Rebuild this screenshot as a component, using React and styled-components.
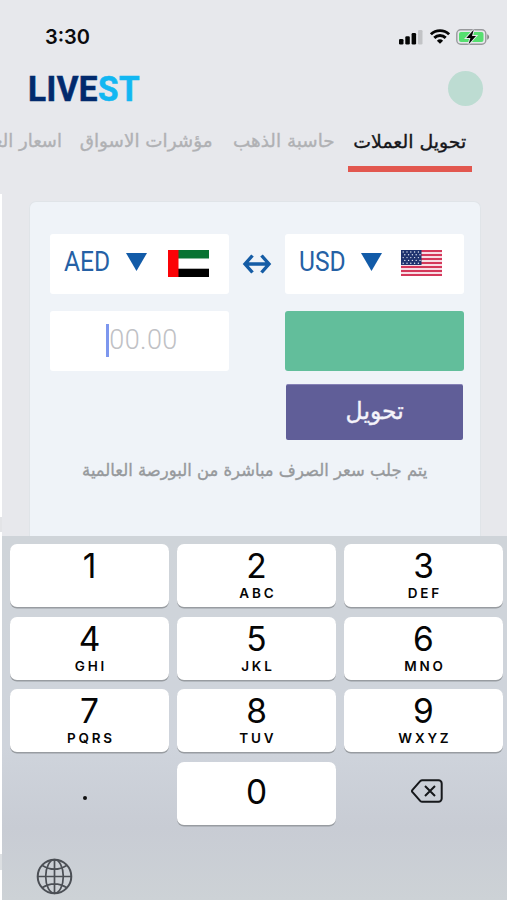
import React, { useState } from "react";
import styled, { createGlobalStyle } from "styled-components";

// -------------------- DATA --------------------
const tabs = [
  { label: "تحويل العملات", width: 124, size: 18, stretch: 1.05 },
  { label: "حاسبة الذهب", width: 112, size: 18, stretch: 1.02 },
  { label: "مؤشرات الاسواق", width: 147, size: 18, stretch: 1.02 },
  { label: "اسعار العملات", width: 112, size: 18, stretch: 1 },
];

const keys = [
  { digit: "1", letters: "" },
  { digit: "2", letters: "ABC" },
  { digit: "3", letters: "DEF" },
  { digit: "4", letters: "GHI" },
  { digit: "5", letters: "JKL" },
  { digit: "6", letters: "MNO" },
  { digit: "7", letters: "PQRS" },
  { digit: "8", letters: "TUV" },
  { digit: "9", letters: "WXYZ" },
];

// -------------------- STYLES --------------------
const GlobalStyle = createGlobalStyle`
  * { box-sizing: border-box; }
  body {
    margin: 0;
    background: #e7e8ec;
    overflow: hidden;
  }
`;

const Screen = styled.div`
  width: 507px;
  height: 900px;
  display: flex;
  flex-direction: column;
  overflow: hidden;
  background: #e7e8ec;
  font-family: "Roboto", "DejaVu Sans", sans-serif;
`;

const StatusBar = styled.header`
  height: 62px;
  padding: 11px 17px 0 45px;
  display: flex;
  align-items: center;
  justify-content: space-between;
`;

const Clock = styled.span`
  font: 600 20px/24px "Inter", sans-serif;
  color: #0b0b0d;
`;

const StatusIcons = styled.div`
  display: flex;
  align-items: center;
  gap: 6px;
`;

const Header = styled.div`
  height: 52px;
  padding: 0 24px 0 28px;
  display: flex;
  align-items: center;
  justify-content: space-between;
`;

const Logo = styled.div`
  font-size: 35px;
  font-weight: 700;
  line-height: 40px;
  letter-spacing: 0.5px;
  color: #022a6d;
  -webkit-text-stroke: 0.6px currentColor;
  transform: scaleX(0.95);
  transform-origin: left;
  padding-top: 3px;

  span { color: #12b7f2; }
`;

const Avatar = styled.div`
  width: 35px;
  height: 35px;
  border-radius: 50%;
  background: #bddcd2;
`;

const Tabs = styled.nav`
  height: 80px;
  padding: 8px 35px 0 0;
  display: flex;
  gap: 8px;
  direction: rtl;
  overflow: hidden;
`;

const Tab = styled.button`
  flex: none;
  width: ${(p) => p.$width}px;
  height: 50px;
  padding: 0 0 ${(p) => (p.$active ? 4 : 7)}px;
  border: 0;
  border-bottom: 6px solid ${(p) => (p.$active ? "#e2574f" : "transparent")};
  background: none;
  color: ${(p) => (p.$active ? "#16171b" : "#b0b1b4")};
  display: flex;
  align-items: center;
  justify-content: center;
`;

const Arabic = styled.span`
  flex: none;
  font-family: "DejaVu Sans", sans-serif;
  font-size: ${(p) => p.$size}px;
  line-height: 1.4;
  white-space: nowrap;
  direction: rtl;
  -webkit-text-stroke: 0.35px currentColor;
  transform: scaleX(${(p) => p.$stretch});
`;

const Body = styled.main`
  flex: 1;
  display: flex;
  min-height: 0;
`;

const Edge = styled.div`
  flex: none;
  width: 2px;
  background: linear-gradient(
    #fff 323px, #e3e4e7 323px 338px, #fff 338px 660px, #dcdfe2 660px 676px, #fff 676px
  );
`;

const Content = styled.div`
  flex: 1;
  display: flex;
  flex-direction: column;
`;

const Card = styled.section`
  width: 452px;
  height: 335px;
  margin: 7px 0 0 27px;
  padding: 32px 16px 0 20px;
  border: 1px solid #e0e4e8;
  border-bottom: 0;
  border-radius: 7px 7px 0 0;
  background: #eff3f8;
`;

const Grid = styled.div`
  display: grid;
  grid-template-columns: 179px 56px 179px;
  grid-template-rows: 60px 60px 56px;
  row-gap: 17px;
`;

const Picker = styled.button`
  border: 0;
  border-radius: 3px;
  background: #fff;
  padding: 0 20px 2px 14px;
  display: flex;
  align-items: center;
`;

const Code = styled.span`
  flex: none;
  width: 62px;
  padding-bottom: 2px;
  text-align: left;
  font: 400 27px/30px "Roboto", sans-serif;
  color: #2561a5;
  transform: scaleX(0.91);
  transform-origin: left;
`;

const Caret = styled.svg`
  flex: none;
  margin-bottom: 3px;
  margin-right: ${(p) => p.$gap}px;
`;

const Swap = styled.div`
  display: grid;
  place-items: center;
`;

const Amount = styled.div`
  border-radius: 3px;
  background: #fff;
  color: #c0c1c5;
  font: 300 27px/33px "Roboto", sans-serif;
  letter-spacing: 0.4px;
  display: flex;
  align-items: center;
  justify-content: center;
  padding-left: 5px;
  padding-bottom: 2px;
`;

const Cursor = styled.i`
  width: 3px;
  height: 33px;
  background: #7d97ee;
`;

const Result = styled.div`
  grid-column: 3;
  border-radius: 3px;
  background: #62be9b;
`;

const Convert = styled.button`
  grid-column: 3;
  height: 56px;
  margin: -4px 1px 0;
  padding: 0 0 2px;
  border: 0;
  border-top: 1px solid #8580b5;
  border-radius: 2px;
  background: #605e98;
  color: #f4f3fa;
  display: flex;
  align-items: center;
  justify-content: center;
`;

const Note = styled.p`
  margin: 15px 0 0;
  padding-right: 5px;
  color: #96999c;
  display: flex;
  justify-content: center;
`;

const Keyboard = styled.div`
  flex: 1;
  padding: 8px 5px 0 8px;
  background: linear-gradient(#cfd4d9, #cfd4dc 58%, #c8ccd4 80%, #cdd2d6);
`;

const KeyGrid = styled.div`
  display: grid;
  grid-template-columns: repeat(3, 159px);
  grid-auto-rows: 63px;
  gap: 9.7px 8px;
`;

const Key = styled.button`
  padding: ${(p) => (p.$center ? "0 0 3px" : "3px 0 0")};
  border: 0;
  border-radius: 7px;
  background: ${(p) => (p.$plain ? "none" : "#fff")};
  box-shadow: ${(p) => (p.$plain ? "none" : "0 1.5px 0 #989ca1")};
  color: #050505;
  display: flex;
  flex-direction: column;
  align-items: center;
  justify-content: ${(p) => (p.$center ? "center" : "flex-start")};

  svg { margin: 0 0 3px 6px; }
`;

const Digit = styled.span`
  font: 400 33.5px/39px "Inter", sans-serif;
`;

const Letters = styled.span`
  font: 600 13.5px/14px "Inter", sans-serif;
  letter-spacing: 2.8px;
  margin-right: -2.8px;
`;

const Dot = styled.i`
  width: 4px;
  height: 4px;
  margin: 11px 9px 0 0;
  border-radius: 50%;
  background: #111;
`;

const Footer = styled.div`
  padding: 33px 0 0 26px;
`;

// -------------------- ICONS --------------------
function Signal() {
  return (
    <svg width="25" height="16" viewBox="0 0 25 16">
      <rect x="0" y="10" width="4.5" height="5.5" rx="1.3" fill="#050505" />
      <rect x="6.3" y="7.2" width="4.5" height="8.3" rx="1.3" fill="#050505" />
      <rect x="12.6" y="4" width="4.5" height="11.5" rx="1.3" fill="#050505" />
      <rect x="19" y="1" width="4.5" height="14.5" rx="1.3" fill="#c2c3c6" />
    </svg>
  );
}

function Wifi() {
  return (
    <svg width="20" height="15" viewBox="0 0 20 15" fill="none" stroke="#050505" strokeWidth="2.9">
      <path d="M.9 5.3a13 13 0 0 1 18.2 0" />
      <path d="M4.3 8.9a8.1 8.1 0 0 1 11.4 0" />
      <path d="M10 14.8 6.9 11.8a4.5 4.5 0 0 1 6.2 0z" fill="#050505" stroke="none" />
    </svg>
  );
}

function Battery() {
  return (
    <svg width="34" height="16" viewBox="0 0 34 16">
      <rect x=".8" y=".8" width="29" height="14.4" rx="4" fill="none" stroke="#98999c" strokeWidth="1.4" />
      <rect x="3" y="3" width="24.5" height="10" rx="2" fill="#56df70" />
      <path d="M31.2 5.2v5.6c2.6-1.4 2.6-4.2 0-5.6z" fill="#8b8c8f" />
      <path d="M17.7.8 10.3 9h4.1l-1.8 6.2L20 6.9h-4z" fill="#050505" stroke="#e7e8ec" strokeWidth="2" paintOrder="stroke" />
    </svg>
  );
}

function UaeFlag() {
  return (
    <svg width="41" height="27" viewBox="0 0 41 27">
      <path fill="#fff" d="M0 0h41v27H0z" />
      <path fill="#087332" d="M10 0h31v8.5H10z" />
      <path fill="#000" d="M10 18.7h31V27H10z" />
      <path fill="#fb0307" d="M0 0h10.5v27H0z" />
    </svg>
  );
}

function UsFlag() {
  const stars = [];
  for (let row = 0; row < 5; row++) {
    for (let col = 0; col < 5; col++) {
      stars.push([2.2 + col * 3.8 + (row % 2) * 1.6, 2 + row * 2.8]);
    }
  }
  return (
    <svg width="41" height="26" viewBox="0 0 41 26">
      <path fill="#f7dde4" d="M0 0h41v26H0z" />
      {[0, 1, 2, 3, 4, 5, 6].map((i) => (
        <rect key={i} y={i * 4} width="41" height="2" fill="#d4385a" />
      ))}
      <rect width="20.5" height="15" fill="#20346f" />
      {stars.map(([x, y], i) => (
        <circle key={i} cx={x} cy={y} r=".7" fill="#e2e7f2" />
      ))}
    </svg>
  );
}

function Triangle({ gap }) {
  return (
    <Caret $gap={gap} width="21" height="18" viewBox="0 0 21 18">
      <path d="M0 0h21L10.5 18z" fill="#125ba8" />
    </Caret>
  );
}

function SwapIcon() {
  return (
    <svg width="30" height="20" viewBox="0 0 30 20" fill="none" stroke="#155ca5" strokeWidth="3.4">
      <path d="M3 10h24M10.5 1.5 3 10l7.5 8.5M19.5 1.5 27 10l-7.5 8.5" />
    </svg>
  );
}

function Backspace() {
  return (
    <svg width="32" height="24" viewBox="0 0 32 24" fill="none" stroke="#16181b" strokeWidth="2" strokeLinejoin="round">
      <path d="M11.3 1.2h16.2a3.2 3.2 0 0 1 3.2 3.2v15.2a3.2 3.2 0 0 1-3.2 3.2H11.3q-1.2 0-2.1-.9L1.5 13.2q-1-1.2 0-2.4l7.7-8.7q.9-.9 2.1-.9z" />
      <path d="m14 7 10 10M24 7 14 17" />
    </svg>
  );
}

function Globe() {
  return (
    <svg width="37" height="37" viewBox="0 0 37 37" fill="none" stroke="#4b4f55" strokeWidth="1.7">
      <circle cx="18.5" cy="18.5" r="16.8" strokeWidth="2" />
      <ellipse cx="18.5" cy="18.5" rx="8.8" ry="16.8" />
      <path d="M18.5 1.5v34M1.5 18.5h34M6 7.2q12.5 8 25 0M6 29.8q12.5-8 25 0" />
    </svg>
  );
}

// -------------------- COMPONENT --------------------
export default function App() {
  const [active, setActive] = useState(0);

  return (
    <Screen>
      <GlobalStyle />
      <StatusBar>
        <Clock>3:30</Clock>
        <StatusIcons>
          <Signal />
          <Wifi />
          <Battery />
        </StatusIcons>
      </StatusBar>

      <Header>
        <Logo>LIVE<span>ST</span></Logo>
        <Avatar />
      </Header>

      <Tabs>
        {tabs.map((tab, i) => (
          <Tab key={tab.label} $width={tab.width} $active={i === active} onClick={() => setActive(i)}>
            <Arabic $size={tab.size} $stretch={tab.stretch}>{tab.label}</Arabic>
          </Tab>
        ))}
      </Tabs>

      <Body>
        <Edge />
        <Content>
          <Card>
            <Grid>
              <Picker>
                <Code>AED</Code>
                <Triangle gap={21} />
                <UaeFlag />
              </Picker>
              <Swap><SwapIcon /></Swap>
              <Picker>
                <Code>USD</Code>
                <Triangle gap={19} />
                <UsFlag />
              </Picker>
              <Amount><Cursor />00.00</Amount>
              <Result />
              <Convert><Arabic $size={24} $stretch={0.98}>تحويل</Arabic></Convert>
            </Grid>
            <Note>
              <Arabic $size={17} $stretch={0.966}>يتم جلب سعر الصرف مباشرة من البورصة العالمية</Arabic>
            </Note>
          </Card>

          <Keyboard>
            <KeyGrid>
              {keys.map((key) => (
                <Key key={key.digit}>
                  <Digit>{key.digit}</Digit>
                  <Letters>{key.letters}</Letters>
                </Key>
              ))}
              <Key $plain $center><Dot /></Key>
              <Key $center><Digit>0</Digit></Key>
              <Key $plain $center><Backspace /></Key>
            </KeyGrid>
            <Footer><Globe /></Footer>
          </Keyboard>
        </Content>
      </Body>
    </Screen>
  );
}
